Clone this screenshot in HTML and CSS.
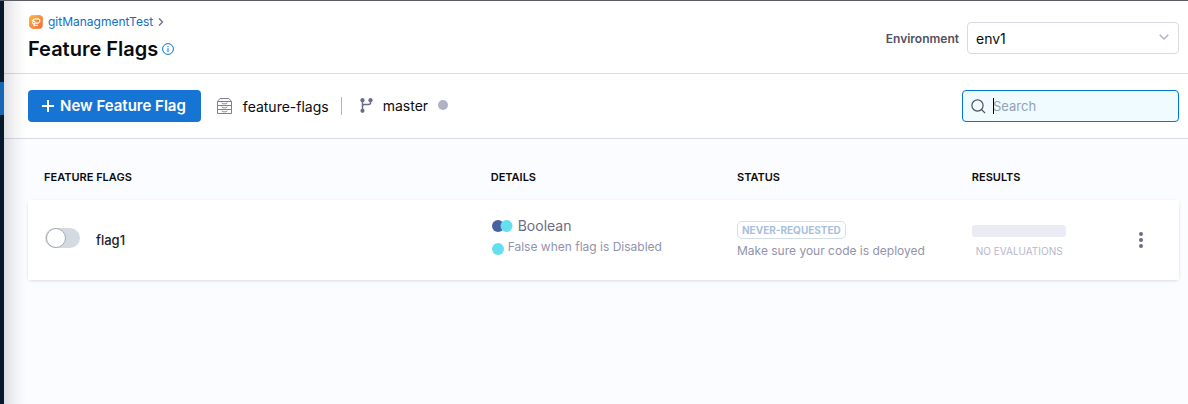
FILE: index.html
```html
<!DOCTYPE html>
<html lang="en">
<head>
<meta charset="utf-8">
<title>Feature Flags</title>
<link rel="stylesheet" href="styles.css">
</head>
<body>
<div class="app">
  <aside class="rail"><a class="rail-active" href="#" aria-label="Feature Flags"></a></aside>
  <main class="main">
    <header class="header">
      <div class="heading">
        <nav class="breadcrumb" aria-label="Breadcrumb">
          <svg width="14" height="14" viewBox="0 0 14 14" fill="none">
            <defs><linearGradient id="orange" x1="0" y1="0" x2="1" y2="1"><stop stop-color="#fcb83a"/><stop offset="1" stop-color="#f2683c"/></linearGradient></defs>
            <path d="M2 .6 10.500 0 12.500 1.300 14 2.500 13.200 11.500 12 13.200 4.500 14 2 12.800.2 11 0 3Z" fill="url(#orange)" stroke="url(#orange)" stroke-width=".6" stroke-linejoin="round"/>
            <path d="M5.800 6.600 3.200 6 5.300 4 9 3.900a1.900 1.900 0 0 1 1.300 3.200L9 8.200 5.500 8M3.500 7.800l2 2.200 2.800.4M5.500 8l-.4 2.800" stroke="#fff" stroke-width="1.200" stroke-linecap="round" stroke-linejoin="round"/>
          </svg>
          <a class="crumb" href="#">gitManagmentTest</a>
          <svg width="6" height="8" viewBox="0 0 6 8" fill="none" stroke="#6b6d85" stroke-width="1.300"><path d="m1 .5 3.500 3.500L1 7.500"/></svg>
        </nav>
        <div class="title-row">
          <h1 class="title">Feature Flags</h1>
          <svg width="12" height="12" viewBox="0 0 12 12" fill="none" stroke="#0278d5"><circle cx="6" cy="6" r="5.400"/><path d="M6 5.200V9M6 3v1.200"/></svg>
        </div>
      </div>
      <div class="environment">
        <label class="env-label" for="env">Environment</label>
        <div class="select-wrap">
          <select class="select" id="env"><option>env1</option></select>
          <svg class="chevron" width="10" height="6" viewBox="0 0 10 6" fill="none" stroke="#b0b1c4" stroke-width="1.400"><path d="m.7.7 4.300 4.300L9.300.7"/></svg>
        </div>
      </div>
    </header>
    <section class="toolbar">
      <button class="new-flag" type="button">
        <svg width="12" height="12" viewBox="0 0 12 12" stroke="#fff" stroke-width="2"><path d="M6 0v12M0 6h12"/></svg>
        New Feature Flag
      </button>
      <div class="repo">
        <svg width="15" height="16" viewBox="0 0 15 16" fill="none" stroke="#7f8098"><path d="M.5 3.500 3 .5h9l2.500 3v12H.5zM.5 3.500h14M.5 7.500h14M.5 11.500h14"/><path d="M5 4.500q0 1.300 1 1.300h3q1 0 1-1.300M5 8.500q0 1.300 1 1.300h3q1 0 1-1.300M5 12.500q0 1.300 1 1.300h3q1 0 1-1.300" stroke-width=".9"/></svg>
        <span>feature-flags</span>
      </div>
      <div class="branch">
        <svg width="13" height="15" viewBox="0 0 13 15" fill="none" stroke="#6b6d85" stroke-width="1.500"><path d="M2.500 2v11M10.500 2v2.500q0 2-2 2h-4q-2 0-2 2"/><g fill="#6b6d85" stroke="none"><circle cx="2.500" cy="2.200" r="2.100"/><circle cx="10.500" cy="2.200" r="2.100"/><circle cx="2.500" cy="12.800" r="2.100"/></g></svg>
        <span>master</span>
        <i class="sync-dot"></i>
      </div>
      <div class="search">
        <svg width="15" height="15" viewBox="0 0 15 15" fill="none" stroke="#4f5162" stroke-width="1.200"><circle cx="6.500" cy="6.500" r="5.600"/><path d="m10.500 10.500 3.600 3.600"/></svg>
        <div class="search-field">
          <input class="search-input" type="search" placeholder="Search" aria-label="Search">
          <i class="caret"></i>
        </div>
      </div>
    </section>
    <section class="content">
      <table class="flags">
        <colgroup><col class="col-name"><col class="col-details"><col class="col-status"><col class="col-results"><col></colgroup>
        <thead>
          <tr><th>FEATURE FLAGS</th><th>DETAILS</th><th>STATUS</th><th>RESULTS</th><td></td></tr>
        </thead>
        <tbody>
          <tr class="flag-row">
            <td>
              <div class="flag">
                <input class="toggle" id="flag1" type="checkbox" role="switch">
                <label class="flag-name" for="flag1">flag1</label>
              </div>
            </td>
            <td>
              <div class="details">
                <div class="kind">
                  <svg width="21" height="12" viewBox="0 0 21 12"><circle cx="6" cy="6" r="6" fill="#47639f"/><circle cx="14.500" cy="6" r="6" fill="#63dff0"/></svg>
                  <span>Boolean</span>
                </div>
                <div class="rule"><i class="variation"></i><span>False when flag is Disabled</span></div>
              </div>
            </td>
            <td>
              <div class="status">
                <span class="badge">NEVER-REQUESTED</span>
                <span class="hint">Make sure your code is deployed</span>
              </div>
            </td>
            <td>
              <div class="bar"></div>
              <div class="no-eval">NO EVALUATIONS</div>
            </td>
            <td>
              <button class="menu" type="button" aria-label="Flag options"><svg width="4" height="16" viewBox="0 0 4 16" fill="#6b6d85"><circle cx="2" cy="2" r="2"/><circle cx="2" cy="8" r="2"/><circle cx="2" cy="14" r="2"/></svg></button>
            </td>
          </tr>
        </tbody>
      </table>
    </section>
  </main>
</div>
</body>
</html>
```
FILE: styles.css
```css
* { box-sizing: border-box; }
body {
  margin: 0;
  font-family: Inter, "Liberation Sans", sans-serif;
  font-size: 14px;
  color: #0b0b0d;
  background: #fbfcff;
}
svg { display: block; flex: none; }
.app { display: flex; min-height: 100vh; border-top: 1px solid #5c5c63; }
.rail { flex: none; width: 4px; padding-top: 81px; background: #07182b; }
.rail-active { display: block; height: 33px; background: #1766b5; }
.main { position: relative; flex: 1; min-width: 0; }
.main::before {
  content: "";
  position: absolute;
  top: 0;
  bottom: 0;
  left: 0;
  width: 22px;
  background: linear-gradient(to right, rgba(40, 41, 61, 0.14), rgba(40, 41, 61, 0.05) 50%, transparent);
  pointer-events: none;
}
.header {
  display: flex;
  justify-content: space-between;
  align-items: center;
  padding: 12px 9px 10px 24px;
  background: #fff;
  border-bottom: 1px solid #d9dae5;
}
.breadcrumb { display: flex; align-items: center; gap: 5px; height: 18px; padding-left: 1px; }
.crumb { font-size: 12px; line-height: 18px; color: #0f6fca; text-decoration: none; }
.title-row { display: flex; align-items: center; gap: 4px; margin-top: 4px; }
.title { margin: 0; font-size: 20px; line-height: 28px; font-weight: 600; }
.environment { display: flex; align-items: center; gap: 8px; }
.env-label { font-size: 12px; font-weight: 600; color: #4f5162; }
.select-wrap { position: relative; width: 212px; }
.select {
  appearance: none;
  display: block;
  width: 100%;
  height: 32px;
  padding: 0 28px 0 8px;
  border: 1px solid #d9dae5;
  border-radius: 4px;
  background: #fff;
  font: inherit;
  color: inherit;
}
.chevron { position: absolute; right: 10px; top: 12px; pointer-events: none; }
.toolbar {
  display: flex;
  align-items: center;
  padding: 16px 9px 16px 24px;
  background: #fff;
  border-bottom: 1px solid #d9dae5;
}
.new-flag {
  display: flex;
  align-items: center;
  gap: 6px;
  height: 32px;
  padding: 0 15px 0 14px;
  border: 0;
  border-radius: 4px;
  background: #1674d4;
  color: #fff;
  font: 600 15px/20px Inter, "Liberation Sans", sans-serif;
}
.repo {
  display: flex;
  align-items: center;
  gap: 11px;
  height: 18px;
  margin-left: 16px;
  padding-right: 12px;
  border-right: 1px solid #b0b1c4;
}
.branch { display: flex; align-items: center; gap: 10px; margin-left: 18px; padding-bottom: 2px; }
.sync-dot { width: 10px; height: 10px; border-radius: 50%; background: #b0b1c4; }
.search {
  display: flex;
  align-items: center;
  gap: 7px;
  width: 217px;
  height: 32px;
  margin-left: auto;
  padding: 0 8px;
  border: 1px solid #0278d5;
  border-radius: 4px;
  background: #effbff;
}
.search-field { position: relative; flex: 1; }
.search-input {
  display: block;
  width: 100%;
  padding: 0;
  border: 0;
  outline: 0;
  background: transparent;
  font: 13px/20px Inter, "Liberation Sans", sans-serif;
}
.search-input::placeholder { color: #92a3b0; }
.caret { position: absolute; left: 0; top: 2px; width: 1px; height: 16px; background: #000; }
.content { padding: 16px 9px 24px 24px; }
.flags { width: 100%; table-layout: fixed; border-collapse: separate; border-spacing: 0; }
.col-name { width: 40.2%; }
.col-details { width: 21.4%; }
.col-status { width: 20.4%; }
.col-results { width: 13.8%; }
.flags th { height: 45px; padding: 0 0 2px; text-align: left; font-size: 11px; font-weight: 600; }
.flags th:first-child, .flag-row td:first-child { padding-left: 16px; }
.flag-row { border-radius: 4px; background: #fff; box-shadow: 0 1px 3px rgba(96, 97, 112, 0.2); }
.flag-row td { height: 80px; padding: 0; }
.flag { display: flex; align-items: center; gap: 16px; }
.toggle {
  appearance: none;
  display: flex;
  align-items: center;
  width: 35px;
  height: 20px;
  margin: 0 0 4px 1px;
  padding: 1px;
  border-radius: 10px;
  background: #d3dae1;
}
.toggle::before {
  content: "";
  width: 18px;
  height: 18px;
  border: 1px solid #a3aab3;
  border-radius: 50%;
  background: #fff;
}
.toggle:checked { justify-content: flex-end; background: #0278d5; }
.flag-name { font-size: 13px; font-weight: 500; color: #22222a; }
.details { padding: 0 0 8px 1px; }
.kind { display: flex; align-items: center; gap: 5px; line-height: 20px; color: #6b6d85; }
.rule { display: flex; align-items: center; gap: 4px; margin-top: 1px; font-size: 12px; line-height: 20px; color: #9293ab; }
.variation { width: 12px; height: 12px; margin-top: 4px; border-radius: 50%; background: #63dff0; }
.status { display: flex; flex-direction: column; align-items: flex-start; gap: 2px; padding-top: 2px; }
.badge {
  padding: 0 4px;
  border: 1px solid #d3dfe8;
  border-radius: 5px;
  font-size: 10px;
  line-height: 16px;
  font-weight: 700;
  color: #a9bfdb;
}
.hint { font-size: 12px; line-height: 20px; color: #9293ab; }
.bar { width: 94px; height: 12px; margin: 4px 0 6px; border-radius: 3px; background: #ebebf5; }
.no-eval { padding-left: 4px; font-size: 10px; line-height: 16px; color: #b7b7c9; }
.menu { display: block; padding: 4px 8px; border: 0; background: transparent; }
```
